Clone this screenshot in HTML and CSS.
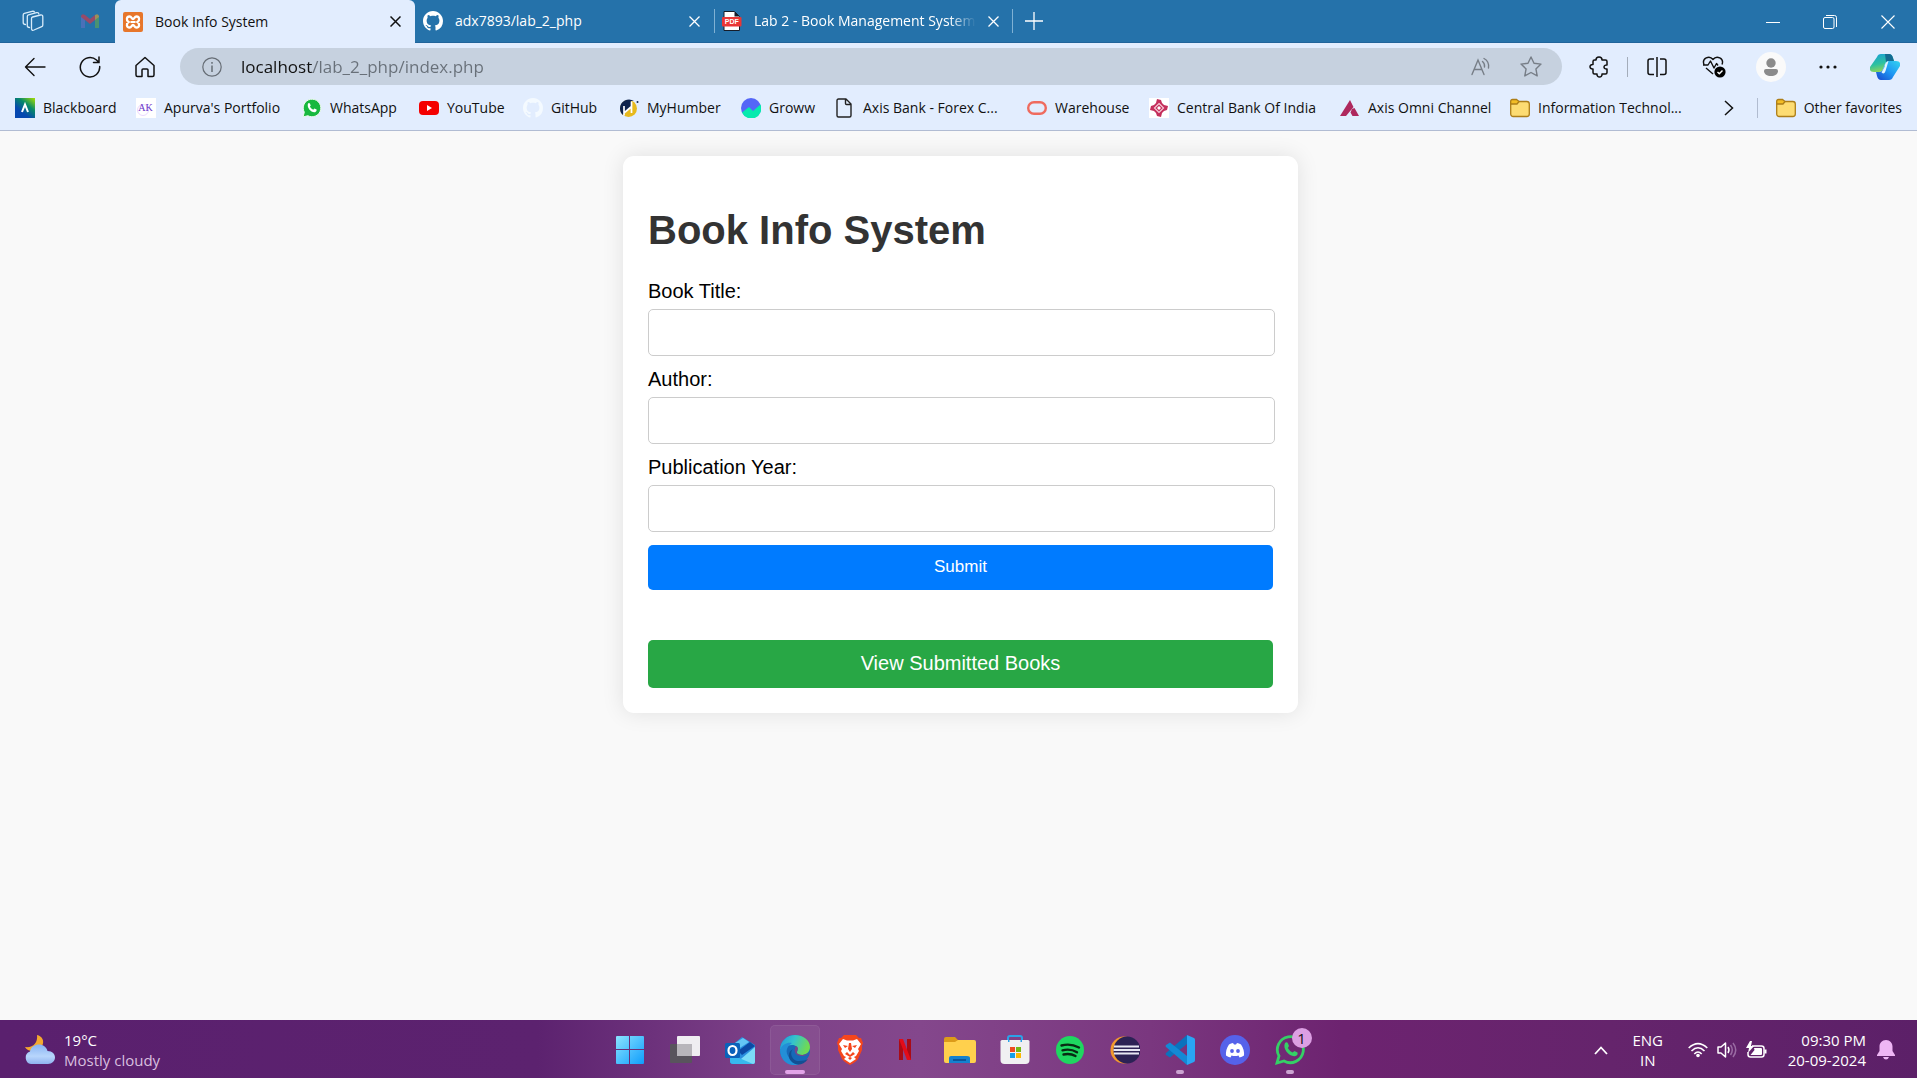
FILE: index.html
```html
<!DOCTYPE html>
<html lang="en">
<head>
<meta charset="utf-8">
<title>Book Info System</title>
<link rel="stylesheet" href="styles.css">
</head>
<body>
<header class="browser">
  <div class="tabstrip">
    <button class="strip-btn workspaces" aria-label="Workspaces"><svg width="22" height="22" viewBox="0 0 22 22" fill="none" stroke="#d8ecfa" stroke-width="1.3" stroke-linejoin="round" stroke-linecap="round"><path d="M9.500 8.500Q9.500 7.300 10.600 7L18.500 5Q20.800 4.600 20.800 6.800V15Q20.800 16.200 19.700 16.700L12 20Q9.500 21 9.500 18.500Z"/><path d="M7.500 17.500Q5.300 17.500 5.300 15.500V6.500Q5.300 5.300 6.500 4.900L14.500 2.700Q16.500 2.300 16.800 3.800"/><path d="M3.500 14.500Q1.200 14.500 1.200 12.500V5Q1.200 3.800 2.400 3.400L10 1.300Q12 1 12.500 2"/></svg></button>
    <button class="strip-btn pinned" aria-label="Gmail"><svg width="18" height="14" viewBox="0 0 18 14"><path d="M0 2v12h4V5z" fill="#4a70b8"/><path d="M14 5v9h4V2z" fill="#4a9272"/><path d="M0 2Q1-1 4 1l5 4 5-4v5l-5 4-5-4-4-3z" fill="#984a68"/><path d="M14 1Q17-1 18 2v1l-4 3z" fill="#9b8f5b"/></svg></button>
    <div class="tab active">
      <svg width="20" height="20" viewBox="0 0 20 20"><rect width="20" height="20" rx="2" fill="#e7762b"/><path d="M6.500 4.500c-3 0-3.500 4-1 5.500-2.500 1.500-2 5.500 1 5.500 2.200 0 2-2.500 3.500-2.500s1.300 2.500 3.500 2.500c3 0 3.500-4 1-5.500 2.500-1.500 2-5.500-1-5.500-2.200 0-2 2.500-3.500 2.500S8.700 4.500 6.500 4.500z" fill="none" stroke="#fff" stroke-width="2.300"/><path d="M7.500 10h5" stroke="#fff" stroke-width="2"/></svg>
      <span class="tab-title">Book Info System</span>
      <button class="tab-close" aria-label="Close tab"><svg width="11" height="11" viewBox="0 0 11 11" stroke="currentColor" stroke-width="1.500"><path d="M.5.5l10 10M10.500.5l-10 10"/></svg></button>
    </div>
    <div class="tab">
      <svg width="20" height="20" viewBox="0 0 16 16" fill="#fff"><path d="M8 0C3.580 0 0 3.580 0 8c0 3.540 2.290 6.530 5.470 7.590.4.070.55-.17.55-.38 0-.19-.01-.82-.01-1.490-2.010.37-2.530-.49-2.690-.94-.09-.23-.48-.94-.82-1.130-.28-.15-.68-.52-.01-.53.63-.01 1.080.58 1.230.82.72 1.210 1.870.87 2.330.66.070-.52.28-.87.51-1.070-1.780-.2-3.640-.89-3.640-3.950 0-.87.31-1.590.82-2.150-.08-.2-.36-1.020.08-2.120 0 0 .67-.21 2.200.82.64-.18 1.320-.27 2-.27s1.360.09 2 .27c1.530-1.040 2.200-.82 2.200-.82.44 1.100.16 1.920.08 2.120.51.56.82 1.270.82 2.150 0 3.070-1.870 3.750-3.650 3.950.29.25.54.73.54 1.480 0 1.070-.01 1.930-.01 2.200 0 .21.15.46.55.38A8.010 8.010 0 0 0 16 8c0-4.420-3.580-8-8-8z"/></svg>
      <span class="tab-title">adx7893/lab_2_php</span>
      <button class="tab-close" aria-label="Close tab"><svg width="11" height="11" viewBox="0 0 11 11" stroke="currentColor" stroke-width="1.300"><path d="M.5.5l10 10M10.500.5l-10 10"/></svg></button>
    </div>
    <div class="tab divided">
      <svg width="20" height="20" viewBox="0 0 20 20"><path d="M2 .5h10.500L17.500 5.500V19.500H2z" fill="#fff" stroke="#161c28"/><path d="M12.500.5v5h5z" fill="#161c28"/><rect y="6" width="19.500" height="9.500" rx="1" fill="#e93636"/><text x="9.800" y="13.300" text-anchor="middle" class="pdf-text">PDF</text></svg>
      <span class="tab-title faded">Lab 2 - Book Management System</span>
      <button class="tab-close" aria-label="Close tab"><svg width="11" height="11" viewBox="0 0 11 11" stroke="currentColor" stroke-width="1.300"><path d="M.5.5l10 10M10.500.5l-10 10"/></svg></button>
    </div>
    <button class="new-tab" aria-label="New tab"><svg width="18" height="18" viewBox="0 0 18 18" stroke="#fff" stroke-width="1.300"><path d="M9 0v18M0 9h18"/></svg></button>
    <div class="window-controls">
      <button aria-label="Minimize"><svg width="14" height="14" viewBox="0 0 14 14" stroke="#fff"><path d="M0 7.500h14"/></svg></button>
      <button aria-label="Restore"><svg width="14" height="14" viewBox="0 0 14 14" fill="none" stroke="#fff"><rect x=".5" y="2.500" width="10.500" height="11" rx="1.500"/><path d="M3 .5h8.500q2 0 2 2V12"/></svg></button>
      <button aria-label="Close"><svg width="14" height="14" viewBox="0 0 14 14" stroke="#fff" stroke-width="1.100"><path d="M.5.5l13 13M13.500.5l-13 13"/></svg></button>
    </div>
  </div>

  <nav class="toolbar" aria-label="Browser toolbar">
    <button class="nav-btn" aria-label="Back"><svg width="22" height="20" viewBox="0 0 22 20" fill="none" stroke="#111" stroke-width="1.400" stroke-linecap="round" stroke-linejoin="round"><path d="M21 10H1.500M10 1.500L1.500 10l8.500 8.500"/></svg></button>
    <button class="nav-btn" aria-label="Refresh"><svg width="22" height="22" viewBox="0 0 22 22" fill="none" stroke="#111" stroke-width="1.500" stroke-linecap="round"><path d="M20.700 10.500A9.700 9.700 0 1 1 17.500 4L20 6.500M20 1v5.500h-5.500"/></svg></button>
    <button class="nav-btn" aria-label="Home"><svg width="20" height="22" viewBox="0 0 20 22" fill="none" stroke="#111" stroke-width="1.500" stroke-linejoin="round"><path d="M1 9.500L10 1.500l9 8V19q0 1.500-1.500 1.500H13V14q0-1-1-1H8q-1 0-1 1v6.500H2.500Q1 20.500 1 19z"/></svg></button>
    <div class="address">
      <svg width="20" height="20" viewBox="0 0 20 20" fill="none" stroke="#666d75" stroke-width="1.200"><circle cx="10" cy="10" r="9.200"/><path d="M10 8.500V15M10 5v1.700" stroke-width="1.500"/></svg>
      <input class="url" type="text" aria-label="Address" value="localhost/lab_2_php/index.php">
      <button aria-label="Read aloud"><svg width="20" height="20" viewBox="0 0 20 20" fill="none" stroke="#777e87" stroke-width="1.400" stroke-linecap="round"><path d="M1 17.500L7 3l6 14.500M3 12.500h8M11.500 4.500Q14 6.500 13.500 10M13 1.500Q18.500 4.500 17.500 11"/></svg></button>
      <button aria-label="Add to favorites"><svg width="22" height="21" viewBox="0 0 22 21" fill="none" stroke="#777e87" stroke-width="1.400" stroke-linejoin="round"><path d="M11 1l3 6.200 7 .9-5.100 4.800 1.300 7L11 16.500l-6.200 3.400 1.300-7L1 8.100l7-.9z"/></svg></button>
    </div>
    <div class="tools">
      <button class="tool" aria-label="Extensions"><svg width="20" height="22" viewBox="0 0 20 22" fill="none" stroke="#111" stroke-width="1.500" stroke-linejoin="round"><path d="M7 4c0-4 6-4 6 0h3.500q1.500 0 1.500 1.500V9c-4-.5-4 4.500 0 4v3.500q0 1.500-1.500 1.500H13c.5 4-5.500 4-5 0H5.500Q4 18 4 16.500V13c-4 .5-4-5 0-4.500v-3Q4 4 5.500 4z"/></svg></button>
      <span class="tool-divider"></span>
      <button class="tool" aria-label="Split screen"><svg width="20" height="20" viewBox="0 0 20 20" fill="none" stroke="#111" stroke-width="1.500"><path d="M7 2H3Q1 2 1 4v11.500q0 2 2 2h4M13 2h4q2 0 2 2v11.500q0 2-2 2h-4M10 0v20"/></svg></button>
      <button class="tool" aria-label="Browser essentials"><svg width="24" height="22" viewBox="0 0 24 22" fill="none" stroke="#111" stroke-width="1.400" stroke-linejoin="round"><path d="M2 8.500C-.5 2 7.500-1 11 3.500 14.500-1 22.500 2 20 8.500M1 9h5l2.500-4 3.500 7 2.500-4.500 1.500 2M4 12l7 6"/><circle cx="18" cy="16" r="5.600" fill="#000" stroke="none"/><path d="M15.500 16l1.800 1.800 3.200-3.400" stroke="#fff"/></svg></button>
      <button class="tool" aria-label="Profile"><svg width="30" height="30" viewBox="0 0 30 30"><circle cx="15" cy="15" r="15" fill="#fafafa"/><circle cx="15" cy="11" r="4.700" fill="#8b8b8b"/><path d="M8 19q0-2 2-2h10q2 0 2 2c0 3-3 5-7 5s-7-2-7-5z" fill="#8b8b8b"/></svg></button>
      <button class="tool" aria-label="Settings and more"><svg width="18" height="4" viewBox="0 0 18 4" fill="#111"><circle cx="2" cy="2" r="1.600"/><circle cx="9" cy="2" r="1.600"/><circle cx="16" cy="2" r="1.600"/></svg></button>
      <button class="tool" aria-label="Copilot"><svg width="30" height="28" viewBox="0 0 30 28"><defs><linearGradient id="cp1" x1="0" y1="0" x2=".3" y2="1"><stop offset="0" stop-color="#189ed8"/><stop offset=".6" stop-color="#2dc1a0"/><stop offset="1" stop-color="#8bd45c"/></linearGradient><linearGradient id="cp2" x1="1" y1="0" x2="0" y2="1"><stop offset="0" stop-color="#35d4f0"/><stop offset=".5" stop-color="#1e97f3"/><stop offset="1" stop-color="#1846cc"/></linearGradient></defs><path d="M7 4Q8 1 11 1h8q3 0 4 4l1 3h-5q-3 0-4 3l-2 5q-1 3-4 3H4q-5 0-4-5z" fill="url(#cp1)"/><path d="M23 24q-1 3-4 3h-8q-3 0-4-4l-1-4h4q2 0 3-3l2-5q1-3 4-3h7q5 0 4 5z" fill="url(#cp2)"/><path d="M15 1h4q3 0 4 4l1 3h-5q-2 0-3 1z" fill="#136b91"/><path d="M14.500 14q.5-5 4-6l-3 10q-1 4-4 1.500z" fill="#e2f4ff"/></svg></button>
    </div>
  </nav>

  <nav class="favorites" aria-label="Favorites">
    <div class="fav-list">
      <a class="fav" href="#"><svg width="20" height="20" viewBox="0 0 20 20"><defs><linearGradient id="bb" x1="1" y1="0" x2=".2" y2="1"><stop offset="0" stop-color="#a8e000"/><stop offset=".4" stop-color="#078a68"/><stop offset=".75" stop-color="#0648b0"/></linearGradient></defs><rect width="20" height="20" fill="url(#bb)"/><path d="M7 14l3-7.500 3 7.500" fill="none" stroke="#fff" stroke-width="2"/></svg>Blackboard</a>
      <a class="fav" href="#"><svg width="20" height="20" viewBox="0 0 20 20"><rect width="20" height="20" fill="#fff"/><circle cx="7" cy="12" r="5.500" fill="none" stroke="#ead8ff"/><text x="9.500" y="13" text-anchor="middle" class="ak-text">AK</text></svg>Apurva's Portfolio</a>
      <a class="fav" href="#"><svg width="20" height="20" viewBox="0 0 20 20"><path d="M1 19l1.300-4.800A8.800 8.800 0 1 1 5.800 17.700z" fill="#17b83f" stroke="#eefbee"/><path d="M6 5.500q1.200-1.200 2 .2l.7 1.700-.8 1.300q1.200 2 3.300 3l1.200-1.100 2.200 1q.5 1.800-1.500 2.600c-3.600.8-8.600-4.200-7.100-8.700z" fill="#fff"/></svg>WhatsApp</a>
      <a class="fav" href="#"><svg width="20" height="20" viewBox="0 0 20 20"><rect y="3" width="20" height="14" rx="4" fill="#f40000"/><path d="M8 7v6l5-3z" fill="#fff"/></svg>YouTube</a>
      <a class="fav" href="#"><svg width="20" height="20" viewBox="0 0 16 16" fill="#f4faff"><path d="M8 0C3.580 0 0 3.580 0 8c0 3.540 2.290 6.530 5.470 7.590.4.070.55-.17.55-.38 0-.19-.01-.82-.01-1.490-2.010.37-2.530-.49-2.690-.94-.09-.23-.48-.94-.82-1.130-.28-.15-.68-.52-.01-.53.63-.01 1.080.58 1.230.82.72 1.210 1.870.87 2.330.66.070-.52.28-.87.51-1.070-1.780-.2-3.640-.89-3.640-3.950 0-.87.31-1.590.82-2.150-.08-.2-.36-1.020.08-2.120 0 0 .67-.21 2.200.82.64-.18 1.320-.27 2-.27s1.360.09 2 .27c1.530-1.040 2.200-.82 2.200-.82.44 1.100.16 1.920.08 2.120.51.56.82 1.270.82 2.150 0 3.070-1.870 3.750-3.650 3.950.29.25.54.73.54 1.480 0 1.070-.01 1.930-.01 2.200 0 .21.15.46.55.38A8.010 8.010 0 0 0 16 8c0-4.420-3.580-8-8-8z"/></svg>GitHub</a>
      <a class="fav" href="#"><svg width="20" height="20" viewBox="0 0 20 20"><circle cx="9.500" cy="10.500" r="8.500" fill="#e7b91c"/><path d="M15 3A9 9 0 0 0 1 10.500q0 4 3 6.500L12 9V3z" fill="#10244d"/><path d="M5 17.500V8M5 15l7-6M12.500 15V3.500" stroke="#fff" stroke-width="1.700" fill="none"/><circle cx="18.500" cy="4" r="1" fill="#10244d"/></svg>MyHumber</a>
      <a class="fav" href="#"><svg width="20" height="20" viewBox="0 0 20 20"><circle cx="10" cy="10" r="10" fill="#5466f7"/><path d="M1 14.500L8 9l4 4 7.500-6.500A10 10 0 0 1 1 14.500z" fill="#05eaae"/></svg>Groww</a>
      <a class="fav" href="#"><svg width="20" height="20" viewBox="0 0 20 20" fill="none" stroke="#222" stroke-width="1.400" stroke-linejoin="round"><path d="M2 2.500Q2 1 3.500 1H11l5 5v11.500q0 1.500-1.500 1.500h-11Q2 19 2 17.500zM10.500 1v4.500q0 1 1 1H16"/></svg>Axis Bank - Forex C...</a>
      <a class="fav" href="#"><svg width="20" height="20" viewBox="0 0 20 20"><rect x="1.200" y="4.200" width="17.600" height="11.600" rx="5.800" fill="none" stroke="#ef6b5e" stroke-width="2.400"/></svg>Warehouse</a>
      <a class="fav" href="#"><svg width="20" height="20" viewBox="0 0 20 20"><rect width="20" height="20" fill="#fff"/><path d="M8 1l4 1 1 3 2 2 4 1-1 4-3 1-2 2-1 4-4-1-1-3-2-2-4-1 1-4 3-1 2-2z" fill="#c42e5c"/><path d="M10 5.500L14.500 10 10 14.500 5.500 10z" fill="none" stroke="#f6c9d6" stroke-width="1.200"/><path d="M10 8l2 2-2 2-2-2z" fill="#fff"/></svg>Central Bank Of India</a>
      <a class="fav" href="#"><svg width="20" height="20" viewBox="0 0 20 20" fill="#ae285d"><path d="M10 2l3.500 7-7.500 9H0zM12 11l2.500-1 4.500 8h-6.500l-2-3.500z"/></svg>Axis Omni Channel</a>
      <a class="fav" href="#"><svg width="20" height="20" viewBox="0 0 20 20" stroke="#ad7e18" stroke-width="1.300"><rect x=".7" y="3.500" width="18.600" height="15" rx="2.500" fill="#fddc72"/><path d="M.7 6V3Q.7 1.500 2.500 1.500h4l2.500 2-2 2.500z" fill="#f3bd25"/></svg>Information Technol...</a>
    </div>
    <div class="fav-end">
      <button class="more-favs" aria-label="More favorites"><svg width="10" height="16" viewBox="0 0 10 16" fill="none" stroke="#111" stroke-width="1.500"><path d="M1 1l7.500 7L1 15"/></svg></button>
      <span class="fav-divider"></span>
      <a class="fav" href="#"><svg width="20" height="20" viewBox="0 0 20 20" stroke="#ad7e18" stroke-width="1.300"><rect x=".7" y="3.500" width="18.600" height="15" rx="2.500" fill="#fddc72"/><path d="M.7 6V3Q.7 1.500 2.500 1.500h4l2.500 2-2 2.500z" fill="#f3bd25"/></svg>Other favorites</a>
    </div>
  </nav>
</header>

<main class="page">
  <section class="card">
    <h1>Book Info System</h1>
    <form class="book-form">
      <label for="title">Book Title:</label>
      <input type="text" id="title" name="title">
      <label for="author">Author:</label>
      <input type="text" id="author" name="author">
      <label for="year">Publication Year:</label>
      <input type="text" id="year" name="year">
      <button type="submit">Submit</button>
    </form>
    <a class="view-books" href="#">View Submitted Books</a>
  </section>
</main>

<footer class="taskbar">
  <button class="weather">
    <svg width="32" height="32" viewBox="0 0 32 32"><defs><linearGradient id="cl" x1="0" y1="0" x2="0" y2="1"><stop offset="0" stop-color="#88b4f3"/><stop offset=".6" stop-color="#b8d6fc"/><stop offset="1" stop-color="#8fb3ef"/></linearGradient></defs><path d="M13 1c5 1 8 6 5 11L9 17Q3 17 1 13c8 1 13-4 12-12z" fill="#f5a92f"/><path d="M7 30a6.500 6.500 0 0 1-1-12.500c1-5 5-7 9-7s7.500 2.500 8.500 6.500c5 0 7.500 3 7.500 6.500S28 30 24 30z" fill="url(#cl)"/></svg>
    <span class="weather-text"><span>19°C</span><span class="dim">Mostly cloudy</span></span>
  </button>

  <div class="apps">
    <button class="app" aria-label="Start"><svg width="30" height="30" viewBox="0 0 30 30"><defs><linearGradient id="wn" x1="0" y1="0" x2="1" y2="1"><stop offset="0" stop-color="#8be4ff"/><stop offset="1" stop-color="#0f9dfc"/></linearGradient></defs><path d="M2 1h12v13H1V2q0-1 1-1zM15 1h13q1 0 1 1v12H15zM1 15h13v14H2q-1 0-1-1zM15 15h14v13q0 1-1 1H15z" fill="url(#wn)"/></svg></button>
    <button class="app" aria-label="Task view"><svg width="30" height="30" viewBox="0 0 30 30"><rect y="9" width="22" height="19" rx="1" fill="#59545d"/><rect x="7" y="1" width="23" height="20" rx="1" fill="#efedf1"/><path d="M7 9h15v12H7z" fill="#b8b5bb"/></svg></button>
    <button class="app" aria-label="Outlook"><svg width="30" height="30" viewBox="0 0 30 30"><path d="M5 12L17 2l13 8v17q0 2-2 2H8q-3 0-3-3z" fill="#2a8ede"/><path d="M7 10L18 3l6 4-14 9z" fill="#64c6f5"/><path d="M30 12v15q0 2-2 2H10z" fill="#7bdcf8"/><path d="M13 16L25 7l5 4-13 9z" fill="#0c4aa5"/><path d="M5 19l23 10H8q-3 0-3-3z" fill="#38b9ee"/><rect y="8" width="15" height="15" rx="1.500" fill="#0a62ba"/><ellipse cx="7.500" cy="15.500" rx="4" ry="4.500" fill="none" stroke="#fff" stroke-width="2.200"/></svg></button>
    <button class="app current" aria-label="Edge"><svg width="30" height="30" viewBox="0 0 30 30"><defs><linearGradient id="ed" x1="0" y1="0" x2="1" y2=".3"><stop offset="0" stop-color="#2293de"/><stop offset=".5" stop-color="#35c3cc"/><stop offset="1" stop-color="#6fda54"/></linearGradient></defs><circle cx="15" cy="15" r="15" fill="#1769b8"/><path d="M0 15C0 6 7 0 15 0c9 0 15 6 15 12 0 6-5 8-9 8-3 0-4.500-1-4-3 2-5-1-7-5-7C6 10 2 13 0 15z" fill="url(#ed)"/><path d="M0 15c2-6 8-8 12-7-5 3-7 8-4 13 3 6 8 9 12 8C10 33 0 26 0 15z" fill="#238fd7"/><path d="M13 14c-4 4-1 12 6 12 4 0 7-1 9-2-5 7-13 7-17 2-4-5-2-10 2-12z" fill="#124f93"/><path d="M16 11c4 2 .5 5 1 7 1 2 8 3 12 0-1 2-4 3-7 3-7 0-9-5-6-10z" fill="#78458c"/></svg></button>
    <button class="app" aria-label="Brave"><svg width="30" height="30" viewBox="0 0 30 30"><path d="M9 0h12l3 3h2l2 5-1 3 0 4-4 9q-2 3-8 6-6-3-8-6L3 15V11L2 8l2-5h2z" fill="#f5461d"/><path d="M8 4l4 1.500h6L22 4l4 5-3 5 1 2-3 5-2 1 2 2-6 4-6-4 2-2-2-1-3-5 1-2-3-5z" fill="#fff"/><path d="M8 10l5 1-3 2zM22 10l-5 1 3 2zM12 17l3 3 3-3 2 2-5 3-5-3zM13 23l2-1 2 1-2 2zM14 8h2l1 6-2 3-2-3z" fill="#f5461d"/></svg></button>
    <button class="app" aria-label="Netflix"><svg width="30" height="30" viewBox="0 0 30 30"><path d="M9 4h4v21H9zM17 4h4v21h-4z" fill="#a90b16"/><path d="M9 4h4l8 21h-4z" fill="#e30c19"/></svg></button>
    <button class="app" aria-label="File Explorer"><svg width="32" height="30" viewBox="0 0 32 30"><path d="M0 4q0-2 2-2h9l3 3h14q3 0 3 3v5H0z" fill="#dc9b19"/><path d="M0 7h11l3-2h16q2 0 2 2v19q0 2-2 2H2q-2 0-2-2z" fill="#ffd04d"/><path d="M5 28v-5q0-2 2-2h16q3 0 3 2v5z" fill="#1481ce"/><path d="M9 24h13v2H9z" fill="#0b559b"/></svg></button>
    <button class="app" aria-label="Microsoft Store"><svg width="30" height="30" viewBox="0 0 30 30"><path d="M8 7V3q0-2 2-2h10q2 0 2 2v4" fill="none" stroke="#2ba2e8" stroke-width="2"/><path d="M2 5h26q1.500 0 1.500 1.500V25q0 4-4 4h-21q-4 0-4-4V6.500Q.5 5 2 5z" fill="#f0f0f2"/><path d="M8 5h1.500V7H8zM20.500 5H22v2h-1.500z" fill="#2ba2e8"/><path d="M10 12h5v5h-5z" fill="#ed4b21"/><path d="M16 12h5v5h-5z" fill="#74b816"/><path d="M10 18h5v5h-5z" fill="#149fe8"/><path d="M16 18h5v5h-5z" fill="#fbb900"/></svg></button>
    <button class="app" aria-label="Spotify"><svg width="30" height="30" viewBox="0 0 30 30"><circle cx="15" cy="15" r="14" fill="#1ed760"/><path d="M6.500 10.500q9-2.500 17.500 2M7.500 15.300q8-2 14.500 2M8.500 19.500q6.500-1.500 12 1.500" fill="none" stroke="#082a13" stroke-width="2.400" stroke-linecap="round"/></svg></button>
    <button class="app" aria-label="Eclipse"><svg width="30" height="30" viewBox="0 0 30 30"><circle cx="14" cy="15" r="13.500" fill="#f39a2e"/><circle cx="17" cy="15" r="13.500" fill="#2c2255"/><path d="M4 10.500h25v2H4zM3.500 14h26.500v2H3.500zM4 17.500h25v2H4z" fill="#e8e8f4"/></svg></button>
    <button class="app running" aria-label="Visual Studio Code"><svg width="30" height="30" viewBox="0 0 30 30"><path d="M22 0v9L5 22.500 1 20q-1-1 0-2z" fill="#0b72bd"/><path d="M22 30v-9L5 7.500 1 10q-1 1 0 2z" fill="#1389d5"/><path d="M22 0l7 3q1 .5 1 2v20q0 1.500-1 2l-7 3z" fill="#2aa5f4"/></svg></button>
    <button class="app" aria-label="Discord"><svg width="30" height="30" viewBox="0 0 30 30"><circle cx="15" cy="15" r="15" fill="#5562ea"/><path d="M9 9.500q2-1.500 4-1.500l1 1.500h2L17 8q2 0 4 1.500 3.500 5 3 11-2 1.500-4.500 2l-1-2q-3.500 1-7 0l-1 2q-2.500-.5-4.500-2-.5-6 3-11z" fill="#fff"/><circle cx="12" cy="16" r="1.900" fill="#5562ea"/><circle cx="18" cy="16" r="1.900" fill="#5562ea"/></svg></button>
    <button class="app running" aria-label="WhatsApp"><svg width="30" height="30" viewBox="0 0 30 30"><path d="M2 28l2-7A13 13 0 1 1 9 26z" fill="none" stroke="#35cf66" stroke-width="2.800"/><path d="M10 8q2-1.500 3 .5l1 2.500-1.200 2q1.700 3 4.700 4.500l2-1.500 3 1.500q.7 2.500-2 3.500C15 22.500 7 14 10 8z" fill="#35cf66"/></svg><span class="badge">1</span></button>
  </div>

  <div class="tray">
    <button aria-label="Show hidden icons"><svg width="14" height="9" viewBox="0 0 14 9" fill="none" stroke="#fff" stroke-width="1.800"><path d="M1 8l6-6.500L13 8"/></svg></button>
    <button class="lang"><span>ENG</span><span>IN</span></button>
    <button class="status" aria-label="Network, volume and battery">
      <svg width="20" height="16" viewBox="0 0 20 16" fill="none" stroke="#fff" stroke-width="1.600"><path d="M.7 6Q10-2.800 19.300 6M3.500 9Q10 2.500 16.500 9M6.300 12Q10 8 13.700 12"/><circle cx="10" cy="13.500" r="1.800" fill="#fff" stroke="none"/></svg>
      <svg width="20" height="18" viewBox="0 0 20 18" fill="none" stroke="#fff" stroke-width="1.500"><path d="M1 6h3l4.500-4v14L4 12H1z" stroke-linejoin="round"/><path d="M11 6q2 3 0 6"/><path d="M13.500 4q3.500 5 0 10M16 2q5.500 7 0 14" stroke="#9a6ba3"/></svg>
      <svg width="21" height="18" viewBox="0 0 21 18"><path d="M6 5h9.500q2.500 0 2.500 2.500v6q0 2.500-2.500 2.500h-11Q2 16 2 13.500V11" fill="none" stroke="#fff" stroke-width="1.500"/><path d="M8 7h7q1 0 1 1v5q0 1-1 1H4.500l4-5z" fill="#fff"/><path d="M4 0L0 7h3l-1 5 6-7H5L6 0zM18.500 8.500h2v4h-2z" fill="#fff"/></svg>
    </button>
    <button class="clock"><span>09:30 PM</span><span>20-09-2024</span></button>
    <button aria-label="Notifications"><svg width="18" height="20" viewBox="0 0 18 20" fill="#eeb6f4"><path d="M9 0c4 0 6.500 3 6.500 6.500V11L18 15v1H0v-1l2.500-4V6.500C2.500 3 5 0 9 0zM6 17h6q-1 2.500-3 2.500T6 17z"/></svg></button>
  </div>
</footer>
</body>
</html>
```
FILE: styles.css
```css
* { box-sizing: border-box; }

html, body { height: 100%; }

body {
  margin: 0;
  display: flex;
  flex-direction: column;
  background: #f9f9f9;
  font-family: "Open Sans", "Noto Sans", sans-serif;
  font-size: 14px;
  color: #111;
}

button {
  padding: 0;
  border: 0;
  background: none;
  color: inherit;
  font: inherit;
  display: flex;
  align-items: center;
  justify-content: center;
}

a { color: inherit; text-decoration: none; }
svg { display: block; flex: none; }

/* Browser frame */
.browser {
  flex: none;
  background: #e2edfe;
  border-bottom: 1px solid #b1bcd3;
}

.tabstrip {
  display: flex;
  height: 43px;
  padding-right: 2px;
  background: #2572aa;
  border-bottom: 1px solid #20649b;
  color: #fff;
}

.strip-btn { height: 42px; }
.workspaces { width: 65px; }
.pinned { width: 50px; }

.tab {
  display: flex;
  align-items: center;
  width: 299px;
  height: 42px;
  padding: 0 8px;
}

.tab.active {
  width: 300px;
  height: 43px;
  background: #e2edfe;
  border-radius: 6px 6px 0 0;
  color: #111;
}

.tab.divided {
  background:
    linear-gradient(#7fb1d4, #7fb1d4) left center / 1px 24px no-repeat,
    linear-gradient(#7fb1d4, #7fb1d4) right center / 1px 24px no-repeat;
}

.tab-title {
  flex: 1;
  margin: 0 5px 0 12px;
  overflow: hidden;
  white-space: nowrap;
  line-height: 20px;
}

.faded {
  -webkit-mask-image: linear-gradient(90deg, #000 88%, transparent);
  mask-image: linear-gradient(90deg, #000 88%, transparent);
}

.tab-close { width: 24px; height: 24px; }
.new-tab { width: 42px; height: 42px; }

.window-controls { display: flex; margin-left: auto; }
.window-controls button { width: 57px; height: 43px; }
.window-controls button:last-child { padding-left: 2px; }

.pdf-text { font: bold 7px "Liberation Sans", sans-serif; fill: #fff; }
.ak-text { font: 10px "Liberation Serif", serif; fill: #6a32c8; }

.toolbar {
  display: flex;
  align-items: center;
  height: 47px;
  padding: 0 4px 0 7px;
}

.nav-btn { width: 55px; height: 40px; }

.address {
  flex: 1;
  display: flex;
  align-items: center;
  height: 37px;
  margin-left: 8px;
  padding: 0 20px 0 22px;
  border-radius: 19px;
  background: #c6d1df;
}

.address button { margin-left: 29px; }

.url {
  flex: 1;
  min-width: 0;
  height: 28px;
  margin-left: 19px;
  padding: 0;
  border: 0;
  outline: 0;
  font: 17px/28px "Open Sans", "Noto Sans", sans-serif;
  color: transparent;
  background: linear-gradient(90deg, #111 72px, #687079 72px);
  -webkit-background-clip: text;
  background-clip: text;
}

.tools { display: flex; align-items: center; padding-left: 8px; }
.tool { width: 57px; height: 40px; }
.tool-divider { width: 1px; height: 20px; background: #a4adba; }

.favorites {
  display: flex;
  align-items: center;
  justify-content: space-between;
  height: 40px;
  padding: 0 15px 5px 15px;
}

.fav-list {
  display: grid;
  grid-template-columns: 121px 166px 117px 104px 96px 122px 94px 192px 122px 191px 170px auto;
}

.fav { display: flex; align-items: center; gap: 8px; white-space: nowrap; line-height: 20px; }
.fav-end { display: flex; align-items: center; gap: 18px; }
.more-favs { width: 20px; height: 28px; }
.fav-divider { width: 1px; height: 20px; background: #b1bcd0; }

/* Page */
.page {
  flex: 1;
  padding: 25px 0 25px 4px;
  font-family: "Liberation Sans", Arial, sans-serif;
  font-size: 20px;
  line-height: 23px;
  color: #000;
}

.card {
  max-width: 675px;
  margin: 0 auto;
  padding: 25px;
  border-radius: 11px;
  background: #fff;
  box-shadow: 0 0 22px rgba(0, 0, 0, .1);
}

h1 {
  margin: 26px 0 27px;
  font-size: 40px;
  line-height: 46px;
  color: #333;
}

.book-form { display: flex; flex-direction: column; }

.book-form input {
  width: calc(100% + 2px);
  height: 47px;
  margin: 6px 0 12px;
  padding: 0 11px;
  border: 1px solid #ccc;
  border-radius: 5px;
  background: #fff;
  font: inherit;
}

.book-form button {
  height: 45px;
  margin-top: 1px;
  padding-bottom: 2px;
  border-radius: 5px;
  background: #007bff;
  color: #fff;
  font-size: 17px;
}

.view-books {
  display: block;
  margin-top: 50px;
  height: 48px;
  line-height: 46px;
  border-radius: 5px;
  background: #28a745;
  color: #fff;
  text-align: center;
}

/* Taskbar */
.taskbar {
  flex: none;
  display: grid;
  grid-template-columns: 1fr auto 1fr;
  align-items: center;
  height: 58px;
  padding: 2px 22px 0 24px;
  background: linear-gradient(90deg, #5a206e 0%, #5c226f 28%, #7d4188 40%, #84478c 48%, #7a377f 60%, #6d2370 70%, #65246c 84%, #5c2068 100%);
  color: #fff;
  font-size: 15px;
  line-height: 20px;
}

.weather { justify-self: start; gap: 8px; text-align: left; }
.weather-text, .lang, .clock { display: flex; flex-direction: column; }
.weather-text { align-items: flex-start; }
.dim { color: #d8bfdf; }

.apps { display: flex; gap: 5px; }

.app {
  position: relative;
  width: 50px;
  height: 50px;
  border-radius: 5px;
}

.current {
  background: rgba(255, 255, 255, .06);
  box-shadow: inset 0 0 0 1px rgba(255, 255, 255, .07);
}

.current::after, .running::after {
  content: "";
  position: absolute;
  bottom: 1px;
  left: 50%;
  width: 8px;
  height: 4px;
  margin-left: -4px;
  border-radius: 2px;
  background: #cba3d1;
}

.current::after { width: 20px; margin-left: -10px; background: #e2a3e8; }

.badge {
  position: absolute;
  top: 3px;
  right: 3px;
  width: 20px;
  height: 20px;
  border-radius: 50%;
  background: #dc9fe3;
  color: #111;
}

.tray { justify-self: end; display: flex; align-items: center; }
.lang { width: 80px; }
.status { gap: 9px; }
.clock { align-items: flex-end; margin: 0 11px 0 21px; }
```
